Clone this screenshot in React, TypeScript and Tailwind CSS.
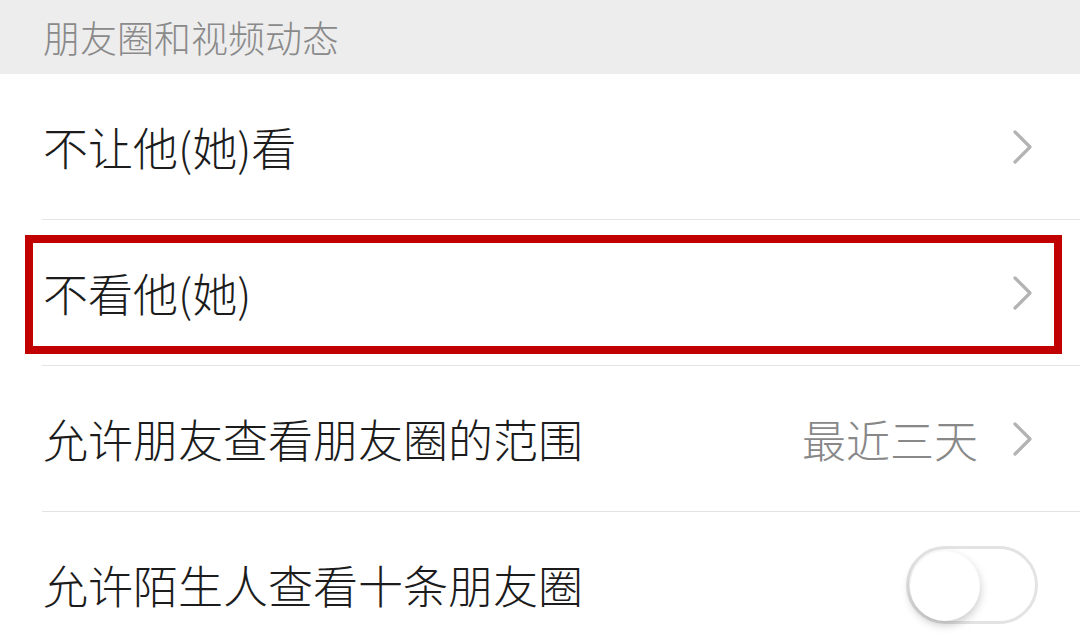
import React from 'react';

const Chevron: React.FC = () => (
  <svg width="22" height="36" viewBox="0 0 22 36" fill="none" className="shrink-0">
    <path d="M3 3 L18 18 L3 33" stroke="#b3b3b3" strokeWidth="3.2" strokeLinecap="round" strokeLinejoin="round" />
  </svg>
);

const Divider: React.FC = () => <div className="ml-[42px] h-px bg-[#e3e3e3]" />;

const Row: React.FC<{ label: string; children?: React.ReactNode; highlight?: boolean }> = ({ label, children, highlight }) => (
  <div className="relative flex h-[145px] items-center justify-between pl-[43px] pr-[46px]">
    <span className="text-[45px] font-light leading-none text-[#1c1c1c]">{label}</span>
    <div className="flex items-center gap-[34px]">{children}</div>
    {highlight && (
      <div className="pointer-events-none absolute top-[15px] bottom-[11px] left-[25px] right-[18px] border-[8px] border-[#c10000]" />
    )}
  </div>
);

const App: React.FC = () => {
  return (
    <div
      className="min-h-screen w-full bg-white"
      style={{ fontFamily: '"Noto Sans CJK SC", "Noto Sans", sans-serif' }}
    >
      <div className="flex h-[74px] items-center bg-[#ededed] pl-[43px]">
        <span className="text-[37px] font-light leading-none text-[#8a8a8a]">朋友圈和视频动态</span>
      </div>

      <Row label="不让他(她)看">
        <Chevron />
      </Row>
      <Divider />

      <Row label="不看他(她)" highlight>
        <Chevron />
      </Row>
      <Divider />

      <Row label="允许朋友查看朋友圈的范围">
        <span className="text-[44px] font-light leading-none text-[#888888]">最近三天</span>
        <Chevron />
      </Row>
      <Divider />

      <div className="flex h-[145px] items-center justify-between pl-[43px] pr-[42px]">
        <span className="text-[45px] font-light leading-none text-[#1c1c1c]">允许陌生人查看十条朋友圈</span>
        <div className="relative h-[78px] w-[132px] rounded-full border-[3px] border-[#e3e3e3] bg-white">
          <div className="absolute left-[1px] top-[2px] h-[70px] w-[70px] rounded-full bg-white shadow-[0_4px_10px_rgba(0,0,0,0.22)]" />
        </div>
      </div>
    </div>
  );
};

export default App;
